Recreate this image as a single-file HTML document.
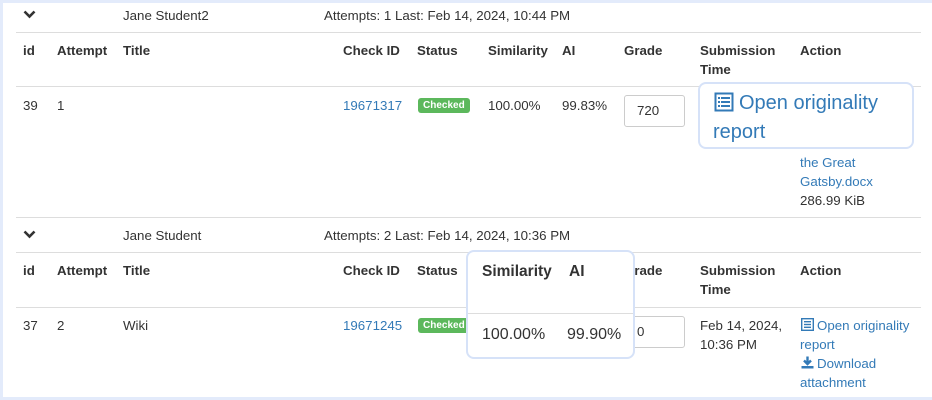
<!DOCTYPE html>
<html><head><meta charset="utf-8"><style>
*{margin:0;padding:0;box-sizing:border-box}
body{width:932px;height:400px;background:#fff;font-family:"Liberation Sans",sans-serif;font-size:13.3px;color:#333;position:relative;overflow:hidden}
.frame{position:absolute;left:0;top:0;width:932px;height:400px;border:3px solid #e3ebfb;border-right:none}
.a{position:absolute;white-space:nowrap;line-height:19px}
.b{font-weight:bold}
.l{color:#337ab7}
.hr{position:absolute;left:16px;width:905px;height:1px;background:#ddd}
.badge{position:absolute;background:#5cb85c;color:#fff;font-size:10px;font-weight:bold;border-radius:3px;padding:0 5px;line-height:15px;height:15px}
.inp{position:absolute;border:1px solid #ccc;border-radius:3px;background:#fff;padding-left:12px;line-height:30px}
.pop{position:absolute;background:#fff;border:2px solid #d6e2f8;border-radius:8px}
</style></head><body>
<div class="frame"></div>
<svg class="a" style="left:23px;top:9px" width="13" height="10" viewBox="0 0 13 10"><path d="M1.5 2.5 L6.5 7.5 L11.5 2.5" fill="none" stroke="#333" stroke-width="2.6"/></svg>
<div class="a" style="left:123px;top:6px">Jane Student2</div>
<div class="a" style="left:324px;top:6px">Attempts: 1 Last: Feb 14, 2024, 10:44 PM</div>
<div class="hr" style="top:32px"></div>
<div class="a b" style="left:23px;top:41px">id</div>
<div class="a b" style="left:57px;top:41px">Attempt</div>
<div class="a b" style="left:123px;top:41px">Title</div>
<div class="a b" style="left:343px;top:41px">Check ID</div>
<div class="a b" style="left:417px;top:41px">Status</div>
<div class="a b" style="left:488px;top:41px">Similarity</div>
<div class="a b" style="left:562px;top:41px">AI</div>
<div class="a b" style="left:624px;top:41px">Grade</div>
<div class="a b" style="left:700px;top:41px;line-height:19px">Submission<br>Time</div>
<div class="a b" style="left:800px;top:41px">Action</div>
<div class="hr" style="top:86px"></div>
<div class="a" style="left:23px;top:96px">39</div>
<div class="a" style="left:57px;top:96px">1</div>
<div class="a l" style="left:343px;top:96px">19671317</div>
<div class="badge" style="left:418px;top:98px">Checked</div>
<div class="a" style="left:488px;top:96px">100.00%</div>
<div class="a" style="left:562px;top:96px">99.83%</div>
<div class="inp" style="left:624px;top:95px;width:61px;height:32px">720</div>
<div class="a l" style="left:800px;top:153px">the Great<br>Gatsby.docx</div>
<div class="a" style="left:800px;top:191px">286.99 KiB</div>
<div class="pop" style="left:698px;top:82px;width:216px;height:67px"></div>
<svg class="a" style="left:714px;top:92px" width="20" height="20" viewBox="0 0 20 20"><rect x="1.5" y="1.5" width="17" height="17" fill="none" stroke="#337ab7" stroke-width="2"/><g fill="#337ab7"><rect x="4" y="5" width="2" height="2"/><rect x="7" y="5" width="9" height="2"/><rect x="4" y="9" width="2" height="2"/><rect x="7" y="9" width="9" height="2"/><rect x="4" y="13" width="2" height="2"/><rect x="7" y="13" width="9" height="2"/></g></svg>
<div class="a l" style="left:713px;top:89px;font-size:20px;line-height:29px;white-space:normal;width:190px;text-indent:26px">Open originality report</div>
<div class="hr" style="top:217px"></div>
<svg class="a" style="left:23px;top:229px" width="13" height="10" viewBox="0 0 13 10"><path d="M1.5 2.5 L6.5 7.5 L11.5 2.5" fill="none" stroke="#333" stroke-width="2.6"/></svg>
<div class="a" style="left:123px;top:226px">Jane Student</div>
<div class="a" style="left:324px;top:226px">Attempts: 2 Last: Feb 14, 2024, 10:36 PM</div>
<div class="hr" style="top:252px"></div>
<div class="a b" style="left:23px;top:261px">id</div>
<div class="a b" style="left:57px;top:261px">Attempt</div>
<div class="a b" style="left:123px;top:261px">Title</div>
<div class="a b" style="left:343px;top:261px">Check ID</div>
<div class="a b" style="left:417px;top:261px">Status</div>
<div class="a b" style="left:624px;top:261px">Grade</div>
<div class="a b" style="left:700px;top:261px">Submission<br>Time</div>
<div class="a b" style="left:800px;top:261px">Action</div>
<div class="hr" style="top:307px"></div>
<div class="a" style="left:23px;top:316px">37</div>
<div class="a" style="left:57px;top:316px">2</div>
<div class="a" style="left:123px;top:316px">Wiki</div>
<div class="a l" style="left:343px;top:316px">19671245</div>
<div class="badge" style="left:418px;top:318px">Checked</div>
<div class="inp" style="left:624px;top:316px;width:61px;height:32px">0</div>
<div class="a" style="left:700px;top:316px">Feb 14, 2024,<br>10:36 PM</div>
<svg class="a" style="left:801px;top:318px" width="13" height="13" viewBox="0 0 13 13"><rect x="0.7" y="0.7" width="11.6" height="11.6" fill="none" stroke="#337ab7" stroke-width="1.4"/><g fill="#337ab7"><rect x="3" y="3" width="7" height="1.4"/><rect x="3" y="5.8" width="7" height="1.4"/><rect x="3" y="8.6" width="7" height="1.4"/></g></svg>
<div class="a l" style="left:800px;top:316px;white-space:normal;width:120px;text-indent:17px">Open originality report</div>
<svg class="a" style="left:801px;top:356px" width="13" height="13" viewBox="0 0 13 13"><path d="M6.5 0.5 V8 M3 4.5 L6.5 8 L10 4.5" fill="none" stroke="#337ab7" stroke-width="2.4"/><rect x="0.5" y="10" width="12" height="2.5" fill="#337ab7"/></svg>
<div class="a l" style="left:817px;top:354px">Download</div>
<div class="a l" style="left:800px;top:373px">attachment</div>
<div class="pop" style="left:466px;top:250px;width:169px;height:109px">
<div style="position:absolute;left:0;right:0;top:61px;height:1px;background:#ddd"></div>
<div class="a b" style="left:14px;top:9px;font-size:15.5px;line-height:22px">Similarity</div>
<div class="a b" style="left:101px;top:9px;font-size:15.5px;line-height:22px">AI</div>
<div class="a" style="left:14px;top:72px;font-size:16px;line-height:22px">100.00%</div>
<div class="a" style="left:99px;top:72px;font-size:16px;line-height:22px">99.90%</div>
</div>
</body></html>
